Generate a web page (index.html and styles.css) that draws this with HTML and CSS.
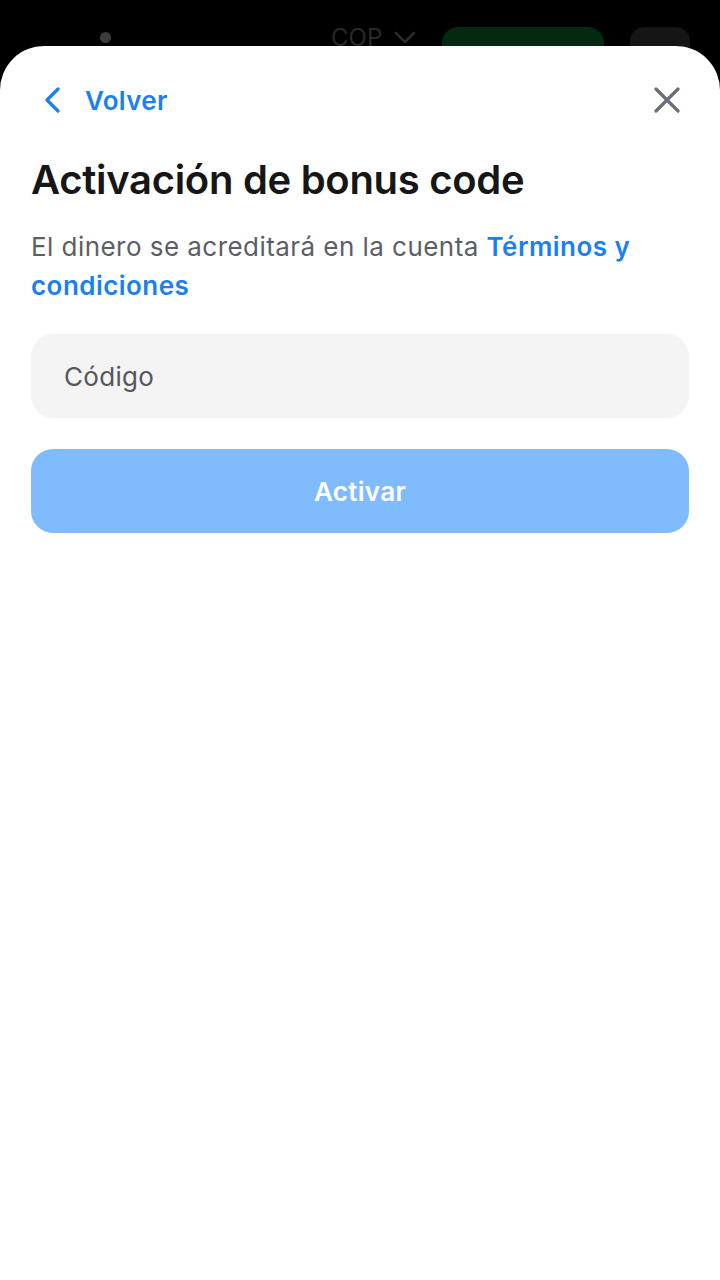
FILE: index.html
```html
<!DOCTYPE html>
<html lang="es">
<head>
    <meta charset="UTF-8">
    <meta name="viewport" content="width=device-width, initial-scale=1.0">
    <title>Activación de bonus code</title>
    <link rel="stylesheet" href="styles.css">
</head>
<body>
    <div class="fondo">
        <span class="punto"></span>
        <span class="moneda">COP
            <svg width="22" height="14" viewBox="0 0 22 14"><path d="M2 2l9 9 9-9" fill="none" stroke="#2a2a2a" stroke-width="2.6" stroke-linecap="round" stroke-linejoin="round"/></svg>
        </span>
        <span class="boton-verde"></span>
        <span class="boton-oscuro"></span>
    </div>

    <div class="hoja">
        <div class="barra">
            <a class="volver" href="#">
                <svg width="20" height="26" viewBox="0 0 20 26"><path d="M15 2L4 13l11 11" fill="none" stroke="#1a7ff0" stroke-width="3.2" stroke-linecap="round" stroke-linejoin="round"/></svg>
                <span>Volver</span>
            </a>
            <button class="cerrar" aria-label="Cerrar">
                <svg width="26" height="26" viewBox="0 0 26 26"><path d="M2 2l22 22M24 2L2 24" stroke="#6b6e78" stroke-width="3.2" stroke-linecap="round"/></svg>
            </button>
        </div>

        <h1 class="titulo">Activación de bonus code</h1>
        <p class="texto">El dinero se acreditará en la cuenta <a href="#">Términos y condiciones</a></p>

        <form class="formulario" onsubmit="return false">
            <input class="campo" type="text" placeholder="Código">
            <button class="activar" type="submit">Activar</button>
        </form>
    </div>
</body>
</html>
```
FILE: styles.css
```css
* {
    box-sizing: border-box;
}
body {
    margin: 0;
    background: #000;
    font-family: Inter, "Noto Sans", sans-serif;
    height: 1280px;
    overflow: hidden;
}
.fondo {
    display: flex;
    align-items: flex-start;
    height: 80px;
    padding-top: 27px;
}
.punto {
    width: 11px;
    height: 11px;
    border-radius: 50%;
    background: #3c3c3c;
    margin: 5px 0 0 100px;
}
.moneda {
    display: flex;
    align-items: center;
    gap: 12px;
    margin-left: 220px;
    color: #2a2a2a;
    font-size: 24px;
    line-height: 22px;
}
.boton-verde {
    width: 162px;
    height: 50px;
    border-radius: 16px;
    background: #032a10;
    margin-left: 26px;
}
.boton-oscuro {
    width: 60px;
    height: 50px;
    border-radius: 14px;
    background: #151515;
    margin-left: 26px;
}
.hoja {
    position: absolute;
    top: 46px;
    left: 0;
    right: 0;
    bottom: 0;
    background: #fff;
    border-radius: 44px 44px 0 0;
    padding: 0 31px;
}
.barra {
    display: flex;
    justify-content: space-between;
    align-items: center;
    height: 108px;
    padding-left: 12px;
}
.volver {
    display: flex;
    align-items: center;
    gap: 22px;
    color: #1a7ff0;
    font-size: 26px;
    font-weight: 600;
    letter-spacing: 0.3px;
    text-decoration: none;
}
.cerrar {
    border: 0;
    background: none;
    padding: 0;
    margin-right: 9px;
    display: flex;
}
.titulo {
    margin: 0;
    font-size: 40px;
    font-weight: 600;
    color: #161616;
    letter-spacing: -0.3px;
    line-height: 52px;
}
.texto {
    margin: 21px 0 0;
    font-size: 26px;
    letter-spacing: 0.45px;
    line-height: 39px;
    color: #5b5e66;
}
.texto a {
    color: #1a7ff0;
    font-weight: 600;
    text-decoration: none;
}
.formulario {
    display: flex;
    flex-direction: column;
    gap: 31px;
    margin-top: 29px;
}
.campo {
    height: 84px;
    border: 0;
    border-radius: 22px;
    background: #f4f4f4;
    padding: 0 33px;
    font-family: inherit;
    font-size: 26px;
    letter-spacing: 0.3px;
    color: #161616;
    outline: none;
}
.campo::placeholder {
    color: #55575e;
}
.activar {
    height: 84px;
    border: 0;
    border-radius: 22px;
    background: #80bbfd;
    color: #fff;
    font-family: inherit;
    font-size: 26px;
    font-weight: 600;
    letter-spacing: 0.3px;
}
```
